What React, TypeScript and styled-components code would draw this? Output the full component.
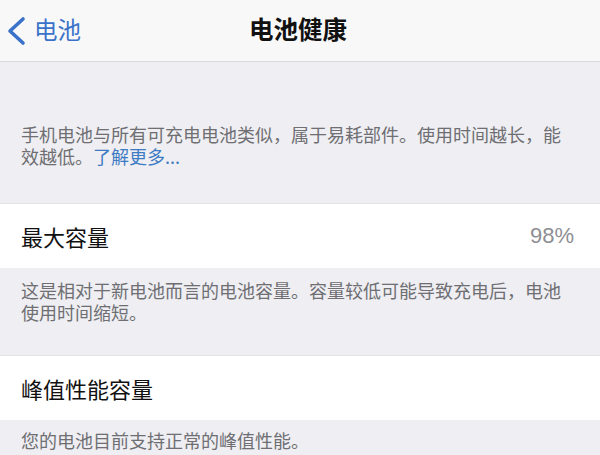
import React from "react";
import styled, { createGlobalStyle } from "styled-components";

const GlobalStyle = createGlobalStyle`
  html, body {
    margin: 0;
    padding: 0;
    background: #efeef2;
  }
  body {
    font-family: "Noto Sans CJK SC", "Noto Sans", sans-serif;
  }
`;

const App = () => {
  return (
    <Page>
      <GlobalStyle />
      <NavBar>
        <BackButton>
          <svg width="22" height="30" viewBox="0 0 22 30">
            <polyline
              points="17,3 4,15 17,27"
              fill="none"
              stroke="#3a72c9"
              strokeWidth="3.6"
              strokeLinecap="round"
              strokeLinejoin="round"
            />
          </svg>
          <BackLabel>电池</BackLabel>
        </BackButton>
        <Title>电池健康</Title>
      </NavBar>

      <Note top={61} bottom={36}>
        手机电池与所有可充电电池类似，属于易耗部件。使用时间越长，能效越低。
        <MoreLink>了解更多...</MoreLink>
      </Note>

      <Row>
        <RowLabel>最大容量</RowLabel>
        <RowValue>98%</RowValue>
      </Row>

      <Note top={11} bottom={32}>
        这是相对于新电池而言的电池容量。容量较低可能导致充电后，电池使用时间缩短。
      </Note>

      <Row>
        <RowLabel>峰值性能容量</RowLabel>
      </Row>

      <Note top={9} bottom={20}>
        您的电池目前支持正常的峰值性能。
      </Note>
    </Page>
  );
};

export default App;

const Page = styled.div`
  width: 600px;
  height: 455px;
  overflow: hidden;
  background: #efeef2;
  display: flex;
  flex-direction: column;
`;

const NavBar = styled.div`
  height: 61px;
  flex-shrink: 0;
  background: #f8f8f8;
  border-bottom: 1px solid #d8d8da;
  display: flex;
  align-items: center;
  justify-content: center;
  position: relative;
`;

const BackButton = styled.div`
  position: absolute;
  left: 6px;
  top: 0;
  bottom: 0;
  display: flex;
  align-items: center;
  gap: 6px;
`;

const BackLabel = styled.span`
  font-size: 23.5px;
  color: #3a72c9;
  line-height: 1;
  padding-bottom: 2px;
`;

const Title = styled.div`
  font-size: 24.5px;
  font-weight: 700;
  color: #111;
  line-height: 1;
  padding: 0 0 2px 0;
  margin-left: -4px;
`;

const Note = styled.div<{ top: number; bottom: number }>`
  flex-shrink: 0;
  padding: ${(p) => p.top}px 32px ${(p) => p.bottom}px 21px;
  font-size: 18px;
  line-height: 22px;
  color: #6e6e73;
`;

const MoreLink = styled.span`
  color: #3d7bc4;
`;

const Row = styled.div`
  height: 64px;
  flex-shrink: 0;
  background: #ffffff;
  border-top: 1px solid #e2e2e5;
  display: flex;
  align-items: center;
  justify-content: space-between;
  padding: 0 26px 0 21px;
`;

const RowLabel = styled.span`
  font-size: 22px;
  color: #111;
`;

const RowValue = styled.span`
  font-family: "Liberation Sans", "Noto Sans", sans-serif;
  font-size: 22px;
  color: #8e8e93;
`;
